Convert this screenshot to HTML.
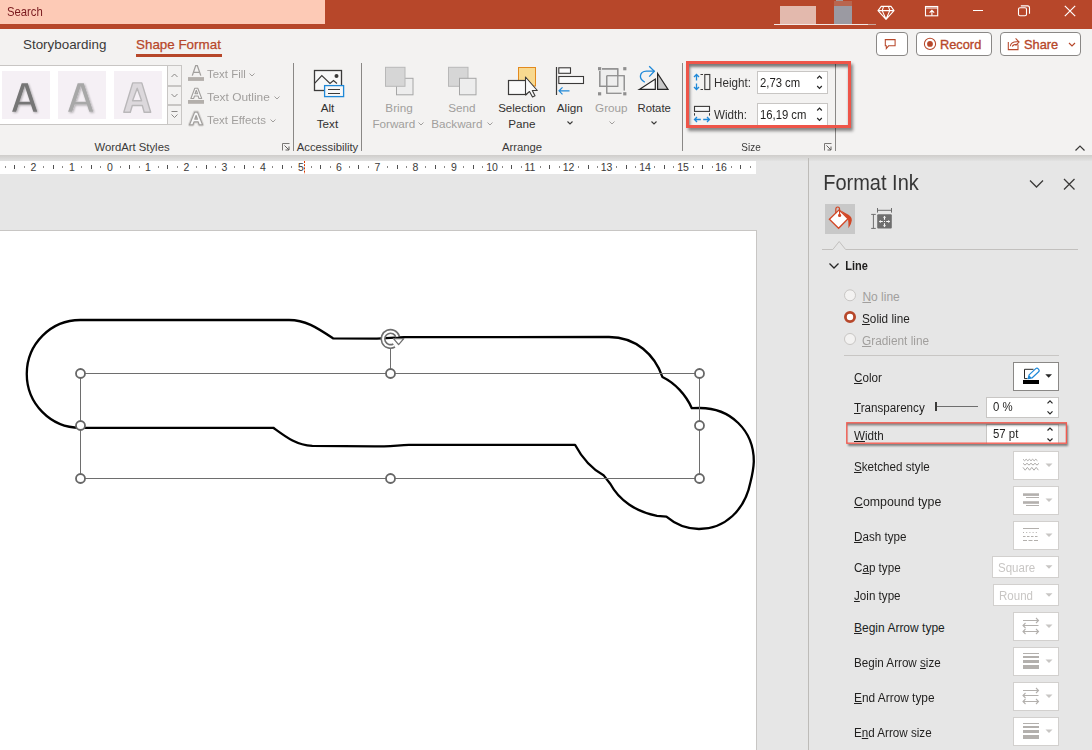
<!DOCTYPE html><html><head><meta charset="utf-8"><style>
html,body{margin:0;padding:0;width:1092px;height:750px;overflow:hidden;background:#E6E6E6;}
body{position:relative;font-family:"Liberation Sans",sans-serif;}
body>div,body>svg{position:absolute;white-space:pre;box-sizing:border-box;}
u{text-decoration:underline;text-underline-offset:1px;text-decoration-thickness:1px;}
</style></head><body>
<div style="left:0px;top:0px;width:1092px;height:29px;background:#B7472A"></div>
<div style="left:0px;top:0px;width:325px;height:24px;background:#FDCAB6"></div>
<div style="left:7px;top:7px;font-size:11.3px;line-height:11.3px;color:#7A1A1E;transform:scale(1.0,1.12);transform-origin:0 9px;">Search</div>
<div style="left:780px;top:6px;width:36px;height:18px;background:#E3B9AD"></div>
<div style="left:834px;top:6px;width:18px;height:18px;background:#9B9AA2"></div>
<div style="left:834px;top:1px;width:18px;height:5px;background:#B8664F"></div>
<div style="left:836px;top:0px;width:7px;height:1px;background:#A09A9C"></div>
<div style="left:774px;top:24px;width:94px;height:1px;background:#F4E8E4"></div>
<div style="left:868px;top:24px;width:8px;height:1px;background:#C9A79C"></div>
<svg style="left:870px;top:0px;" width="30" height="24" viewBox="0 0 30 24"><g transform="translate(-870,0)"><path d="M881.2 6.4H891L894 10.6L886 19.3L878 10.6Z M878 10.6H894 M883.6 6.4L882.2 10.6L886 19.3L889.8 10.6L888.4 6.4" fill="none" stroke="#fff" stroke-width="1.1" stroke-linejoin="round"/></g></svg>
<svg style="left:924px;top:5px;" width="16" height="13" viewBox="0 0 16 13"><rect x="1.5" y="1.5" width="12.2" height="9.3" fill="none" stroke="#fff" stroke-width="1.1"/><path d="M1.5 3H13.7 M7.9 10.8V5.4 M5.6 7.6L7.9 5.3L10.2 7.6" fill="none" stroke="#fff" stroke-width="1.1"/></svg>
<div style="left:973px;top:10px;width:10px;height:1px;background:#fff"></div>
<svg style="left:1017px;top:5px;" width="14" height="13" viewBox="0 0 14 13"><rect x="1.5" y="2.8" width="8" height="8" rx="1.5" fill="none" stroke="#fff" stroke-width="1.1"/><path d="M3.8 0.9H10.5Q12.5 0.9 12.5 2.9V8.8" fill="none" stroke="#fff" stroke-width="1.1"/></svg>
<svg style="left:1063px;top:4px;" width="14" height="14" viewBox="0 0 14 14"><path d="M1.8 1.8L12.2 12.2M12.2 1.8L1.8 12.2" stroke="#fff" stroke-width="1.2"/></svg>
<div style="left:0px;top:29px;width:1092px;height:126px;background:#F3F2F1"></div>
<div style="left:23px;top:38px;font-size:13.4px;line-height:13.4px;color:#3B3A39;">Storyboarding</div>
<div style="left:136px;top:38px;font-size:13.4px;line-height:13.4px;color:#B7472A;-webkit-text-stroke:0.25px #B7472A;">Shape Format</div>
<div style="left:136px;top:54px;width:86px;height:3px;background:#B7472A"></div>
<div style="left:876px;top:32px;width:32px;height:24px;border:1px solid #8A8886;border-radius:4px;background:#fff;"></div>
<div style="left:916px;top:32px;width:76px;height:24px;border:1px solid #8A8886;border-radius:4px;background:#fff;"></div>
<div style="left:1000px;top:32px;width:81px;height:24px;border:1px solid #8A8886;border-radius:4px;background:#fff;"></div>
<svg style="left:882px;top:36px;" width="18" height="16" viewBox="0 0 18 16"><path d="M3.3 3.6H13.1V9.8H6.6L4.3 12.6V9.8H3.3Z" fill="none" stroke="#B7472A" stroke-width="1.05" stroke-linejoin="miter"/></svg>
<svg style="left:922px;top:36px;" width="16" height="16" viewBox="0 0 16 16"><circle cx="8" cy="7.9" r="5.6" fill="none" stroke="#B7472A" stroke-width="1.05"/><circle cx="8" cy="7.9" r="2.9" fill="#B7472A"/></svg>
<div style="left:940px;top:39px;font-size:12.8px;line-height:12.8px;color:#B7472A;-webkit-text-stroke:0.35px #B7472A;">Record</div>
<svg style="left:1006px;top:36px;" width="16" height="16" viewBox="0 0 16 16"><path d="M2.3 6.1V13.6H12V8.8" fill="none" stroke="#B7472A" stroke-width="1.05"/><path d="M4.3 10.2Q5 5.2 12.2 5.8 M6.2 10.4Q7.5 8 12.2 8.3 M9.6 2.3L13.1 6.1L9.6 9.5" fill="none" stroke="#B7472A" stroke-width="1.05"/></svg>
<div style="left:1024px;top:39px;font-size:12.8px;line-height:12.8px;color:#B7472A;-webkit-text-stroke:0.35px #B7472A;">Share</div>
<svg style="left:1067px;top:41px;" width="10" height="7" viewBox="0 0 10 7"><path d="M2 2L5 5L8 2" fill="none" stroke="#B7472A" stroke-width="1.2"/></svg>
<div style="left:-1px;top:65px;width:183px;height:60px;border:1px solid #C8C6C4;background:#fff"></div>
<div style="left:167px;top:65px;width:15px;height:60px;border:1px solid #C8C6C4;background:#F3F2F1"></div>
<div style="left:167px;top:85px;width:15px;height:2px;background:#C8C6C4"></div>
<div style="left:167px;top:104px;width:15px;height:2px;background:#C8C6C4"></div>
<div style="left:2px;top:71px;width:48px;height:48px;background:#F5F0F5"></div>
<div style="left:58px;top:71px;width:48px;height:48px;background:#F5F0F5"></div>
<div style="left:114px;top:71px;width:48px;height:48px;background:#F5F0F5"></div>
<svg style="left:0px;top:60px;" width="170" height="60" viewBox="0 0 170 60"><defs><filter id="sh" x="-20%" y="-20%" width="140%" height="140%"><feGaussianBlur in="SourceAlpha" stdDeviation="0.9"/><feOffset dx="0.6" dy="1.3"/><feComponentTransfer><feFuncA type="linear" slope="0.3"/></feComponentTransfer><feMerge><feMergeNode/><feMergeNode in="SourceGraphic"/></feMerge></filter></defs>
<g transform="translate(0,-60)">
<path d="M12.10 111.80 L21.70 83.20 L27.80 83.20 L37.30 111.80 L33.30 111.80 L30.84 104.40 L18.58 104.40 L16.10 111.80ZM19.46 101.80 L29.98 101.80 L24.75 86.05Z" fill="#767676" fill-rule="evenodd" filter="url(#sh)"/>
<path d="M68.10 111.80 L77.70 83.20 L83.80 83.20 L93.30 111.80 L89.30 111.80 L86.84 104.40 L74.58 104.40 L72.10 111.80ZM75.46 101.80 L85.98 101.80 L80.75 86.05Z" fill="#A8A8A8" fill-rule="evenodd" filter="url(#sh)"/>
<path d="M123.8 112.3 L132.7 82.9 L141.8 82.9 L150.7 112.3 L144.2 112.3 L142.3 105.5 L132.3 105.5 L130.3 112.3ZM132.6 100.8 L141.6 100.8 L137.2 88.3Z" fill="#DCD8DC" fill-rule="evenodd" stroke="#B9B7B9" stroke-width="1.4" stroke-linejoin="round"/>
</g></svg>
<svg style="left:167px;top:66px;" width="15" height="58" viewBox="0 0 15 58"><path d="M4.5 11L7.5 8L10.5 11 M4.5 28L7.5 31L10.5 28 M4.5 45.5H10.5 M4.5 48.5L7.5 51.5L10.5 48.5" fill="none" stroke="#8A8886" stroke-width="1"/></svg>
<svg style="left:186px;top:62px;" width="22" height="66" viewBox="0 0 22 66"><path d="M6.3 13.6L9.7 3.6H11.3L14.8 13.6M8 10.4H13" fill="none" stroke="#A19F9D" stroke-width="1.3"/>
<rect x="2" y="15.1" width="16" height="3.8" fill="#B3AFAB"/>
<path d="M4.9 36.5L8.8 26.3L11.8 26.3L15.7 36.5L13 36.5L12.1 34L8.5 34L7.6 36.5Z M9 31.8L11.6 31.8L10.3 28.2Z" fill="#F8F8F8" fill-rule="evenodd" stroke="#A19F9D" stroke-width="1.1" stroke-linejoin="round"/>
<rect x="2" y="38" width="16" height="3.8" fill="#B3AFAB"/>
<path d="M3.5 62.8L8.6 50.2L11.6 50.2L16.6 62.8L13.2 62.8L12.1 59.8L8.1 59.8L7 62.8Z M8.8 57.2L11.4 57.2L10.1 53.5Z" fill="none" stroke="#DAD8D6" stroke-width="3.2" stroke-linejoin="round"/>
<path d="M3.5 62.8L8.6 50.2L11.6 50.2L16.6 62.8L13.2 62.8L12.1 59.8L8.1 59.8L7 62.8Z M8.8 57.2L11.4 57.2L10.1 53.5Z" fill="#F8F8F8" fill-rule="evenodd" stroke="#A19F9D" stroke-width="1.2" stroke-linejoin="round"/></svg>
<div style="left:207.3px;top:69px;font-size:11.5px;line-height:11.5px;color:#A19F9D;transform:scale(0.995,1.0);transform-origin:0 9px;">Text Fill</div>
<div style="left:207.3px;top:92px;font-size:11.5px;line-height:11.5px;color:#A19F9D;transform:scale(1.035,1.0);transform-origin:0 9px;">Text Outline</div>
<div style="left:207.3px;top:115px;font-size:11.5px;line-height:11.5px;color:#A19F9D;transform:scale(0.995,1.0);transform-origin:0 9px;">Text Effects</div>
<svg style="left:248px;top:71.5px;" width="8" height="6" viewBox="0 0 8 6"><path d="M1.5 1.5L4 4L6.5 1.5" fill="none" stroke="#A19F9D" stroke-width="1"/></svg>
<svg style="left:272.5px;top:94.5px;" width="8" height="6" viewBox="0 0 8 6"><path d="M1.5 1.5L4 4L6.5 1.5" fill="none" stroke="#A19F9D" stroke-width="1"/></svg>
<svg style="left:268.5px;top:117.5px;" width="8" height="6" viewBox="0 0 8 6"><path d="M1.5 1.5L4 4L6.5 1.5" fill="none" stroke="#A19F9D" stroke-width="1"/></svg>
<div style="left:-368px;width:1000px;text-align:center;top:142px;font-size:11.3px;line-height:11.3px;color:#3B3A39;">WordArt Styles</div>
<svg style="left:282px;top:143px;" width="9" height="9" viewBox="0 0 9 9"><path d="M0.5 7.5V0.5H7.5" fill="none" stroke="#7A7876" stroke-width="1"/><path d="M2.5 2.5L7 7M7 3.5V7H3.5" fill="none" stroke="#605E5C" stroke-width="1"/></svg>
<div style="left:293px;top:63px;width:1px;height:88px;background:#8A8886"></div>
<div style="left:361px;top:63px;width:1px;height:88px;background:#8A8886"></div>
<div style="left:682px;top:63px;width:1px;height:88px;background:#8A8886"></div>
<div style="left:835px;top:63px;width:1px;height:88px;background:#8A8886"></div>
<svg style="left:312px;top:68px;" width="34" height="31" viewBox="0 0 34 31"><rect x="2.5" y="2.5" width="27" height="20" fill="#F8F8F8" stroke="#3B3A39" stroke-width="1.3"/>
<path d="M2.8 15.2L9.8 7.5L18 15.5L21.5 12.5L25 15.5" fill="none" stroke="#3B3A39" stroke-width="1.2"/>
<circle cx="24.5" cy="8" r="2" fill="#3B3A39"/>
<rect x="12.6" y="17.6" width="19" height="11" fill="#F8F8F8" stroke="#1E88D8" stroke-width="1.3"/>
<path d="M16 21.5H28M16 25.5H28" stroke="#3B3A39" stroke-width="1"/></svg>
<div style="left:-172.5px;width:1000px;text-align:center;top:102px;font-size:11.7px;line-height:11.7px;color:#323130;">Alt</div>
<div style="left:-172.5px;width:1000px;text-align:center;top:118px;font-size:11.7px;line-height:11.7px;color:#323130;">Text</div>
<div style="left:-172.5px;width:1000px;text-align:center;top:142px;font-size:11.3px;line-height:11.3px;color:#3B3A39;">Accessibility</div>
<svg style="left:380px;top:62px;" width="40" height="36" viewBox="0 0 40 36"><rect x="16.5" y="16.3" width="16.5" height="16.5" fill="#EDEDED" stroke="#A6A6A6" stroke-width="1"/>
<rect x="5.5" y="5.3" width="19.5" height="19" fill="#D6D6D6" stroke="#B8B8B8" stroke-width="1"/></svg>
<div style="left:-101px;width:1000px;text-align:center;top:102px;font-size:11.7px;line-height:11.7px;color:#A19F9D;">Bring</div>
<div style="left:372.4px;top:118px;font-size:11.7px;line-height:11.7px;color:#A19F9D;">Forward</div>
<svg style="left:417px;top:120.5px;" width="8" height="6" viewBox="0 0 8 6"><path d="M1.5 1.5L4 4L6.5 1.5" fill="none" stroke="#A19F9D" stroke-width="1"/></svg>
<svg style="left:443px;top:62px;" width="40" height="36" viewBox="0 0 40 36"><rect x="5.5" y="5.3" width="19.5" height="19" fill="#D6D6D6" stroke="#B8B8B8" stroke-width="1"/>
<rect x="16.5" y="16.3" width="16.5" height="16.5" fill="#EDEDED" stroke="#A6A6A6" stroke-width="1"/></svg>
<div style="left:-38.19999999999999px;width:1000px;text-align:center;top:102px;font-size:11.7px;line-height:11.7px;color:#A19F9D;">Send</div>
<div style="left:431.2px;top:118px;font-size:11.7px;line-height:11.7px;color:#A19F9D;">Backward</div>
<svg style="left:486px;top:120.5px;" width="8" height="6" viewBox="0 0 8 6"><path d="M1.5 1.5L4 4L6.5 1.5" fill="none" stroke="#A19F9D" stroke-width="1"/></svg>
<svg style="left:505px;top:64px;" width="36" height="34" viewBox="0 0 36 34"><rect x="13.5" y="3.5" width="17" height="18.5" fill="#F8D98F" stroke="#E38A1E" stroke-width="1"/>
<rect x="3.5" y="16.5" width="18" height="14" fill="#FAFAFA" stroke="#3B3A39" stroke-width="1.2"/>
<path d="M20.5 13V31L24.5 27.5L27.5 33L30 31.8L27.3 26.5H32.3Z" fill="#FAFAFA" stroke="#3B3A39" stroke-width="1.1" stroke-linejoin="round"/></svg>
<div style="left:21.799999999999955px;width:1000px;text-align:center;top:103px;font-size:11.5px;line-height:11.5px;color:#323130;">Selection</div>
<div style="left:21.799999999999955px;width:1000px;text-align:center;top:118px;font-size:11.7px;line-height:11.7px;color:#323130;">Pane</div>
<svg style="left:553px;top:64px;" width="34" height="34" viewBox="0 0 34 34"><path d="M3.5 3V31" stroke="#3B3A39" stroke-width="1.2"/>
<rect x="5.8" y="3.8" width="11.7" height="5.5" fill="#FAFAFA" stroke="#3B3A39" stroke-width="1.1"/>
<rect x="5.8" y="12.5" width="24.7" height="7" fill="#FAFAFA" stroke="#3B3A39" stroke-width="1.1"/>
<path d="M6 26.8H16.5M9.5 23.3L6 26.8L9.5 30.3" fill="none" stroke="#1E88D8" stroke-width="1.2"/></svg>
<div style="left:69.79999999999995px;width:1000px;text-align:center;top:102px;font-size:11.7px;line-height:11.7px;color:#323130;">Align</div>
<svg style="left:566px;top:120px;" width="8" height="6" viewBox="0 0 8 6"><path d="M1.5 1.5L4 4L6.5 1.5" fill="none" stroke="#3B3A39" stroke-width="1.1"/></svg>
<svg style="left:594px;top:62px;" width="36" height="36" viewBox="0 0 36 36"><g transform="translate(-594,-62)">
<path d="M602 68.9H617.8V86.4H599.8V71" fill="#EEEEEE" stroke="#8F8F8F" stroke-width="1.1"/>
<path d="M606.8 75.7H624.2V90.5 M621.5 93.2H606.8V75.7" fill="none" stroke="#8F8F8F" stroke-width="1.1"/>
<rect x="607.3" y="76.2" width="16.4" height="16.5" fill="#EEEEEE" opacity="0.6"/>
<path d="M602 68.9H617.8V86.4H599.8V71 M606.8 75.7H624.2V90.5 M621.5 93.2H606.8V75.7" fill="none" stroke="#8F8F8F" stroke-width="1.1"/>
<rect x="598" y="67.1" width="3.2" height="3.2" fill="#8F8F8F"/><rect x="623.2" y="67.1" width="3.2" height="3.2" fill="#8F8F8F"/>
<rect x="598" y="92.2" width="3.2" height="3.2" fill="#8F8F8F"/><rect x="623.2" y="92.2" width="3.2" height="3.2" fill="#8F8F8F"/></g></svg>
<div style="left:111.29999999999995px;width:1000px;text-align:center;top:102px;font-size:11.7px;line-height:11.7px;color:#A19F9D;">Group</div>
<svg style="left:607.5px;top:120px;" width="8" height="6" viewBox="0 0 8 6"><path d="M1.5 1.5L4 4L6.5 1.5" fill="none" stroke="#A19F9D" stroke-width="1"/></svg>
<svg style="left:634px;top:62px;" width="38" height="32" viewBox="0 0 38 32"><g transform="translate(-634,-62)">
<path d="M639.3 89.4L655.3 79V89.4Z" fill="#FAFAFA" stroke="#262626" stroke-width="1.2" stroke-linejoin="miter"/>
<path d="M657.6 73.5V89.4H668Z" fill="#C8C8C8" stroke="#262626" stroke-width="1.2" stroke-linejoin="miter"/>
<path d="M644.8 82.2Q640.2 79.5 640.4 76Q641 71.3 646.5 71.2H654.5" fill="none" stroke="#1E88D8" stroke-width="1.3"/>
<path d="M649.2 66.2L654.3 71.2L649.2 76.6" fill="none" stroke="#1E88D8" stroke-width="1.3"/></g></svg>
<div style="left:154.20000000000005px;width:1000px;text-align:center;top:103px;font-size:11.3px;line-height:11.3px;color:#323130;">Rotate</div>
<svg style="left:649.5px;top:120px;" width="8" height="6" viewBox="0 0 8 6"><path d="M1.5 1.5L4 4L6.5 1.5" fill="none" stroke="#3B3A39" stroke-width="1.1"/></svg>
<div style="left:22px;width:1000px;text-align:center;top:142px;font-size:11.3px;line-height:11.3px;color:#3B3A39;">Arrange</div>
<svg style="left:692px;top:72px;" width="20" height="20" viewBox="0 0 20 20"><path d="M4.5 2.5V8.6M4.5 11.4V17.5M2 5L4.5 2.5L7 5M2 15L4.5 17.5L7 15" fill="none" stroke="#1E88D8" stroke-width="1.3"/>
<path d="M8.5 2.5H11 M8.5 17.5H11" stroke="#3B3A39" stroke-width="1"/>
<rect x="12.8" y="2.5" width="5" height="15" fill="none" stroke="#3B3A39" stroke-width="1.1"/></svg>
<div style="left:714px;top:77px;font-size:12px;line-height:12px;color:#323130;transform:scale(0.97,1.0);transform-origin:0 10px;">Height:</div>
<svg style="left:692px;top:104px;" width="20" height="20" viewBox="0 0 20 20"><rect x="2.5" y="2.4" width="15" height="5" fill="#F8F8F8" stroke="#3B3A39" stroke-width="1.1"/>
<path d="M2.5 9.2V11.6 M17.5 9.2V11.6" stroke="#3B3A39" stroke-width="1"/>
<path d="M2.5 15.5H8.8M11.2 15.5H17.5M5 13L2.5 15.5L5 18M15 13L17.5 15.5L15 18" fill="none" stroke="#1E88D8" stroke-width="1.3"/></svg>
<div style="left:714px;top:109px;font-size:12px;line-height:12px;color:#323130;transform:scale(0.97,1.0);transform-origin:0 10px;">Width:</div>
<div style="left:757px;top:71px;width:71px;height:23px;border:1px solid #C8C6C4;background:#fff"></div>
<div style="left:757px;top:103px;width:71px;height:24px;border:1px solid #C8C6C4;background:#fff"></div>
<div style="left:760.3px;top:77px;font-size:12px;line-height:12px;color:#201F1E;transform:scale(0.94,1.0);transform-origin:0 10px;">2,73 cm</div>
<div style="left:760.3px;top:109px;font-size:12px;line-height:12px;color:#201F1E;transform:scale(0.94,1.0);transform-origin:0 10px;">16,19 cm</div>
<svg style="left:815.5px;top:74px;" width="7" height="16" viewBox="0 0 7 16"><path d="M1.2 4.5L3.5 2.2L5.8 4.5 M1.2 12L3.5 14.3L5.8 12" fill="none" stroke="#262626" stroke-width="1.2"/></svg>
<svg style="left:815.5px;top:106px;" width="7" height="16" viewBox="0 0 7 16"><path d="M1.2 4.5L3.5 2.2L5.8 4.5 M1.2 12L3.5 14.3L5.8 12" fill="none" stroke="#262626" stroke-width="1.2"/></svg>
<div style="left:251px;width:1000px;text-align:center;top:142px;font-size:11.3px;line-height:11.3px;color:#3B3A39;transform:scale(0.88,1.0);transform-origin:50% 9px;">Size</div>
<svg style="left:824px;top:143px;" width="9" height="9" viewBox="0 0 9 9"><path d="M0.5 7.5V0.5H7.5" fill="none" stroke="#7A7876" stroke-width="1"/><path d="M2.5 2.5L7 7M7 3.5V7H3.5" fill="none" stroke="#605E5C" stroke-width="1"/></svg>
<svg style="left:1074px;top:144px;" width="12" height="8" viewBox="0 0 12 8"><path d="M1.5 6.5L6 2L10.5 6.5" fill="none" stroke="#3B3A39" stroke-width="1.2"/></svg>
<div style="left:686px;top:61px;width:165px;height:67px;border:3px solid #EE5549;box-shadow:2px 3px 3px rgba(0,0,0,0.45), inset 1px 3px 3px rgba(0,0,0,0.5)"></div>
<div style="left:0px;top:155px;width:1092px;height:6px;background:linear-gradient(#CFCDCB,#E2E2E2)"></div>
<div style="left:0px;top:161px;width:756px;height:13px;background:#fff"></div>
<svg style="left:0px;top:0px;" width="760" height="180" viewBox="0 0 760 180"><rect x="5" y="166" width="1" height="2" fill="#8A8886"/><rect x="14" y="165" width="1" height="4" fill="#505050"/><rect x="24" y="166" width="1" height="2" fill="#8A8886"/><rect x="43" y="166" width="1" height="2" fill="#8A8886"/><rect x="53" y="165" width="1" height="4" fill="#505050"/><rect x="62" y="166" width="1" height="2" fill="#8A8886"/><rect x="81" y="166" width="1" height="2" fill="#8A8886"/><rect x="91" y="165" width="1" height="4" fill="#505050"/><rect x="100" y="166" width="1" height="2" fill="#8A8886"/><rect x="120" y="166" width="1" height="2" fill="#8A8886"/><rect x="129" y="165" width="1" height="4" fill="#505050"/><rect x="139" y="166" width="1" height="2" fill="#8A8886"/><rect x="158" y="166" width="1" height="2" fill="#8A8886"/><rect x="167" y="165" width="1" height="4" fill="#505050"/><rect x="177" y="166" width="1" height="2" fill="#8A8886"/><rect x="196" y="166" width="1" height="2" fill="#8A8886"/><rect x="206" y="165" width="1" height="4" fill="#505050"/><rect x="215" y="166" width="1" height="2" fill="#8A8886"/><rect x="234" y="166" width="1" height="2" fill="#8A8886"/><rect x="244" y="165" width="1" height="4" fill="#505050"/><rect x="253" y="166" width="1" height="2" fill="#8A8886"/><rect x="272" y="166" width="1" height="2" fill="#8A8886"/><rect x="282" y="165" width="1" height="4" fill="#505050"/><rect x="291" y="166" width="1" height="2" fill="#8A8886"/><rect x="311" y="166" width="1" height="2" fill="#8A8886"/><rect x="320" y="165" width="1" height="4" fill="#505050"/><rect x="330" y="166" width="1" height="2" fill="#8A8886"/><rect x="349" y="166" width="1" height="2" fill="#8A8886"/><rect x="358" y="165" width="1" height="4" fill="#505050"/><rect x="368" y="166" width="1" height="2" fill="#8A8886"/><rect x="387" y="166" width="1" height="2" fill="#8A8886"/><rect x="397" y="165" width="1" height="4" fill="#505050"/><rect x="406" y="166" width="1" height="2" fill="#8A8886"/><rect x="425" y="166" width="1" height="2" fill="#8A8886"/><rect x="435" y="165" width="1" height="4" fill="#505050"/><rect x="444" y="166" width="1" height="2" fill="#8A8886"/><rect x="463" y="166" width="1" height="2" fill="#8A8886"/><rect x="473" y="165" width="1" height="4" fill="#505050"/><rect x="482" y="166" width="1" height="2" fill="#8A8886"/><rect x="502" y="166" width="1" height="2" fill="#8A8886"/><rect x="511" y="165" width="1" height="4" fill="#505050"/><rect x="521" y="166" width="1" height="2" fill="#8A8886"/><rect x="540" y="166" width="1" height="2" fill="#8A8886"/><rect x="549" y="165" width="1" height="4" fill="#505050"/><rect x="559" y="166" width="1" height="2" fill="#8A8886"/><rect x="578" y="166" width="1" height="2" fill="#8A8886"/><rect x="588" y="165" width="1" height="4" fill="#505050"/><rect x="597" y="166" width="1" height="2" fill="#8A8886"/><rect x="616" y="166" width="1" height="2" fill="#8A8886"/><rect x="626" y="165" width="1" height="4" fill="#505050"/><rect x="635" y="166" width="1" height="2" fill="#8A8886"/><rect x="654" y="166" width="1" height="2" fill="#8A8886"/><rect x="664" y="165" width="1" height="4" fill="#505050"/><rect x="673" y="166" width="1" height="2" fill="#8A8886"/><rect x="693" y="166" width="1" height="2" fill="#8A8886"/><rect x="702" y="165" width="1" height="4" fill="#505050"/><rect x="712" y="166" width="1" height="2" fill="#8A8886"/><rect x="731" y="166" width="1" height="2" fill="#8A8886"/><rect x="740" y="165" width="1" height="4" fill="#505050"/><rect x="750" y="166" width="1" height="2" fill="#8A8886"/></svg>
<div style="left:-466.5px;width:1000px;text-align:center;top:162px;font-size:10.5px;line-height:10.5px;color:#3B3A39;">2</div>
<div style="left:-428.0px;width:1000px;text-align:center;top:162px;font-size:10.5px;line-height:10.5px;color:#3B3A39;">1</div>
<div style="left:-390.0px;width:1000px;text-align:center;top:162px;font-size:10.5px;line-height:10.5px;color:#3B3A39;">0</div>
<div style="left:-352.0px;width:1000px;text-align:center;top:162px;font-size:10.5px;line-height:10.5px;color:#3B3A39;">1</div>
<div style="left:-313.5px;width:1000px;text-align:center;top:162px;font-size:10.5px;line-height:10.5px;color:#3B3A39;">2</div>
<div style="left:-275.5px;width:1000px;text-align:center;top:162px;font-size:10.5px;line-height:10.5px;color:#3B3A39;">3</div>
<div style="left:-237.0px;width:1000px;text-align:center;top:162px;font-size:10.5px;line-height:10.5px;color:#3B3A39;">4</div>
<div style="left:-199.0px;width:1000px;text-align:center;top:162px;font-size:10.5px;line-height:10.5px;color:#3B3A39;">5</div>
<div style="left:-161.0px;width:1000px;text-align:center;top:162px;font-size:10.5px;line-height:10.5px;color:#3B3A39;">6</div>
<div style="left:-122.5px;width:1000px;text-align:center;top:162px;font-size:10.5px;line-height:10.5px;color:#3B3A39;">7</div>
<div style="left:-84.5px;width:1000px;text-align:center;top:162px;font-size:10.5px;line-height:10.5px;color:#3B3A39;">8</div>
<div style="left:-46.0px;width:1000px;text-align:center;top:162px;font-size:10.5px;line-height:10.5px;color:#3B3A39;">9</div>
<div style="left:-8.0px;width:1000px;text-align:center;top:162px;font-size:10.5px;line-height:10.5px;color:#3B3A39;">10</div>
<div style="left:30.0px;width:1000px;text-align:center;top:162px;font-size:10.5px;line-height:10.5px;color:#3B3A39;">11</div>
<div style="left:68.5px;width:1000px;text-align:center;top:162px;font-size:10.5px;line-height:10.5px;color:#3B3A39;">12</div>
<div style="left:106.5px;width:1000px;text-align:center;top:162px;font-size:10.5px;line-height:10.5px;color:#3B3A39;">13</div>
<div style="left:145.0px;width:1000px;text-align:center;top:162px;font-size:10.5px;line-height:10.5px;color:#3B3A39;">14</div>
<div style="left:183.0px;width:1000px;text-align:center;top:162px;font-size:10.5px;line-height:10.5px;color:#3B3A39;">15</div>
<div style="left:221.0px;width:1000px;text-align:center;top:162px;font-size:10.5px;line-height:10.5px;color:#3B3A39;">16</div>
<svg style="left:303px;top:161px;" width="3" height="13" viewBox="0 0 3 13"><path d="M1.5 0V13" stroke="#D83B01" stroke-width="1" stroke-dasharray="2 1.2"/></svg>
<div style="left:-1px;top:230px;width:758px;height:521px;background:#fff;border:1px solid #C8C6C4"></div>
<div style="left:808px;top:158px;width:1px;height:592px;background:#BDBBB8"></div>
<div style="left:823.2px;top:173px;font-size:20px;line-height:20px;color:#363636;transform:scale(1.0,1.08);transform-origin:0 17px;">Format Ink</div>
<svg style="left:1027px;top:177px;" width="18" height="13" viewBox="0 0 18 13"><path d="M3 3.5L9.5 10L16 3.5" fill="none" stroke="#3B3A39" stroke-width="1.3"/></svg>
<svg style="left:1061px;top:176px;" width="16" height="16" viewBox="0 0 16 16"><path d="M3 3L13.5 13.5M13.5 3L3 13.5" fill="none" stroke="#3B3A39" stroke-width="1.3"/></svg>
<div style="left:825px;top:204px;width:30px;height:30px;background:#C8C8C8"></div>
<svg style="left:825px;top:204px;" width="30" height="30" viewBox="0 0 30 30"><path d="M4.4 15.3L14.1 5.9L23 14.7L13.6 24.3Z" fill="#fff" stroke="#D24726" stroke-width="1.3" stroke-linejoin="miter"/>
<path d="M10.8 9.2V5.3Q10.8 3 12.7 3Q14.6 3 14.6 5.3V11.3" fill="none" stroke="#D24726" stroke-width="1.2"/>
<circle cx="14.6" cy="11.4" r="1.6" fill="#D24726"/>
<path d="M15.5 6.3Q20 9 23.5 10.8Q27 13 26.8 16.5Q26.5 20 23.5 24.3Q23.6 19 23 14.7Z" fill="#D24726"/></svg>
<svg style="left:866px;top:204px;" width="30" height="30" viewBox="0 0 30 30"><path d="M7.4 10.4V24.4 M5.2 10.4H9.8 M5.2 24.4H9.8" fill="none" stroke="#6E6E6E" stroke-width="1"/>
<path d="M11.5 4V8.6 M25.5 4V8.6 M11.5 6.3H25.5" fill="none" stroke="#6E6E6E" stroke-width="1"/>
<rect x="11.2" y="10.2" width="14.6" height="14.4" rx="1" fill="#6E6E6E"/>
<path d="M18.5 13.5V15.8 M18.5 19.2V21.5 M14.5 17.5H16.8 M20.2 17.5H22.5" stroke="#fff" stroke-width="1.1"/>
<path d="M18.5 11.8L17 13.8H20Z M18.5 23.2L17 21.2H20Z M12.8 17.5L14.8 16V19Z M24.2 17.5L22.2 16V19Z" fill="#fff"/>
<rect x="18" y="17" width="1" height="1" fill="#fff"/></svg>
<svg style="left:815px;top:238px;" width="270" height="14" viewBox="0 0 270 14"><path d="M7 11.5H17.8L24.2 3.5L30.6 11.5H263" fill="none" stroke="#C2C0BE" stroke-width="1"/></svg>
<svg style="left:826px;top:260px;" width="14" height="12" viewBox="0 0 14 12"><path d="M3.5 3.5L8 8L12.5 3.5" fill="none" stroke="#262626" stroke-width="1.3"/></svg>
<div style="left:845.3px;top:261px;font-size:11px;line-height:11px;color:#201F1E;font-weight:700;transform:scale(1.0,1.12);transform-origin:0 9px;">Line</div>
<svg style="left:842px;top:287px;" width="16" height="60" viewBox="0 0 16 60"><circle cx="8" cy="8.3" r="5.5" fill="#F3F2F1" stroke="#C8C6C4" stroke-width="1"/>
<circle cx="8" cy="30" r="4.6" fill="#fff" stroke="#B7472A" stroke-width="2.8"/>
<circle cx="8" cy="52" r="5.5" fill="#F3F2F1" stroke="#C8C6C4" stroke-width="1"/></svg>
<div style="left:862.4px;top:291px;font-size:12px;line-height:12px;color:#A19F9D;"><u>N</u>o line</div>
<div style="left:862.4px;top:313px;font-size:12px;line-height:12px;color:#201F1E;transform:scale(0.98,1.0);transform-origin:0 10px;"><u>S</u>olid line</div>
<div style="left:862.4px;top:335px;font-size:12px;line-height:12px;color:#A19F9D;transform:scale(0.985,1.0);transform-origin:0 10px;"><u>G</u>radient line</div>
<div style="left:844px;top:355px;width:215px;height:1px;background:#C8C6C4"></div>
<div style="left:854px;top:372px;font-size:12px;line-height:12px;color:#201F1E;transform:scale(0.97,1.0);transform-origin:0 10px;"><u>C</u>olor</div>
<div style="left:854px;top:402px;font-size:12px;line-height:12px;color:#201F1E;transform:scale(0.97,1.0);transform-origin:0 10px;"><u>T</u>ransparency</div>
<div style="left:854px;top:430px;font-size:12px;line-height:12px;color:#201F1E;transform:scale(0.97,1.0);transform-origin:0 10px;"><u>W</u>idth</div>
<div style="left:854px;top:461px;font-size:12px;line-height:12px;color:#201F1E;transform:scale(0.97,1.0);transform-origin:0 10px;"><u>S</u>ketched style</div>
<div style="left:854px;top:496px;font-size:12px;line-height:12px;color:#201F1E;transform:scale(1.03,1.0);transform-origin:0 10px;"><u>C</u>ompound type</div>
<div style="left:854px;top:531px;font-size:12px;line-height:12px;color:#201F1E;transform:scale(0.97,1.0);transform-origin:0 10px;"><u>D</u>ash type</div>
<div style="left:854px;top:562px;font-size:12px;line-height:12px;color:#201F1E;transform:scale(0.97,1.0);transform-origin:0 10px;">C<u>a</u>p type</div>
<div style="left:854px;top:590px;font-size:12px;line-height:12px;color:#201F1E;transform:scale(0.97,1.0);transform-origin:0 10px;"><u>J</u>oin type</div>
<div style="left:854px;top:622px;font-size:12px;line-height:12px;color:#201F1E;"><u>B</u>egin Arrow type</div>
<div style="left:854px;top:657px;font-size:12px;line-height:12px;color:#201F1E;transform:scale(0.97,1.0);transform-origin:0 10px;">Begin Arrow <u>s</u>ize</div>
<div style="left:854px;top:692px;font-size:12px;line-height:12px;color:#201F1E;transform:scale(0.99,1.0);transform-origin:0 10px;"><u>E</u>nd Arrow type</div>
<div style="left:854px;top:727px;font-size:12px;line-height:12px;color:#201F1E;transform:scale(0.97,1.0);transform-origin:0 10px;">E<u>n</u>d Arrow size</div>
<div style="left:1013px;top:362px;width:46px;height:29px;border:1px solid #8A8886;background:#fff"></div>
<svg style="left:1013px;top:362px;" width="46" height="29" viewBox="0 0 46 29"><path d="M11.5 16.6V7.3H20.5 M11.5 16.6H14.5" fill="none" stroke="#262626" stroke-width="1"/>
<g transform="translate(15.2,16.6) rotate(-43)"><path d="M0 0L3.2 -2.1H12.3Q14 -2.1 14 0Q14 2.1 12.3 2.1H3.2Z" fill="#fff" stroke="#1E88D8" stroke-width="1.2" stroke-linejoin="round"/><path d="M0.3 0L3 -1.6V1.6Z" fill="#1E88D8"/><path d="M4.5 0H12" stroke="#fff" stroke-width="1"/></g>
<rect x="10" y="18" width="16" height="4" fill="#000"/>
<path d="M32.3 12.3H39L35.65 15.7Z" fill="#262626"/></svg>
<div style="left:935px;top:402px;width:2px;height:9px;background:#3B3A39"></div>
<div style="left:937px;top:406px;width:41px;height:1px;background:#6E6E6E"></div>
<div style="left:986px;top:397px;width:73px;height:21px;border:1px solid #C8C6C4;background:#fff"></div>
<div style="left:993.2px;top:401px;font-size:12px;line-height:12px;color:#201F1E;transform:scale(0.95,1.0);transform-origin:0 10px;">0 %</div>
<svg style="left:1045px;top:398px;" width="10" height="20" viewBox="0 0 10 20"><path d="M2.5 5.3L5 2.8L7.5 5.3 M2.5 13.3L5 15.8L7.5 13.3" fill="none" stroke="#262626" stroke-width="1.2"/></svg>
<div style="left:986px;top:424px;width:73px;height:20px;border:1px solid #C8C6C4;border-bottom:none;background:#fff"></div>
<div style="left:993.2px;top:428px;font-size:12px;line-height:12px;color:#201F1E;transform:scale(0.95,1.0);transform-origin:0 10px;">57 pt</div>
<svg style="left:1045px;top:425px;" width="10" height="20" viewBox="0 0 10 20"><path d="M2.5 5.5L5 3L7.5 5.5 M2.5 13.5L5 16L7.5 13.5" fill="none" stroke="#262626" stroke-width="1.2"/></svg>
<div style="left:846.5px;top:422.5px;width:220px;height:21px;box-shadow:1px 2px 2px rgba(0,0,0,0.45), inset 0px 2.5px 2px rgba(0,0,0,0.4)"></div>
<svg style="left:840px;top:416px;" width="232" height="34" viewBox="0 0 232 34"><rect x="6.8" y="6.8" width="219.6" height="20.4" fill="none" stroke="#F35A4F" stroke-width="1.35"/></svg>
<div style="left:1013px;top:451px;width:46px;height:29px;border:1px solid #D2D0CE;background:#fff"></div>
<div style="left:1013px;top:486px;width:46px;height:29px;border:1px solid #D2D0CE;background:#fff"></div>
<div style="left:1013px;top:521px;width:46px;height:29px;border:1px solid #D2D0CE;background:#fff"></div>
<div style="left:1013px;top:612px;width:46px;height:29px;border:1px solid #D2D0CE;background:#fff"></div>
<div style="left:1013px;top:647px;width:46px;height:29px;border:1px solid #D2D0CE;background:#fff"></div>
<div style="left:1013px;top:682px;width:46px;height:29px;border:1px solid #D2D0CE;background:#fff"></div>
<div style="left:1013px;top:717px;width:46px;height:29px;border:1px solid #D2D0CE;background:#fff"></div>
<svg style="left:1013px;top:451px;" width="46" height="29" viewBox="0 0 46 29"><path d="M10.0 8.3 L11.6 9.7 L13.2 8.3 L14.8 9.7 L16.4 8.3 L18.0 9.7 L19.6 8.3 L21.2 9.7 L22.8 8.3 L24.4 9.7 M10.0 12.3 L12.0 14.1 L14.0 12.3 L16.0 14.1 L18.0 12.3 L20.0 14.1 L22.0 12.3 L24.0 14.1 L26.0 12.3 M10.0 16.4 L12.2 19.2 L14.4 16.4 L16.6 19.2 L18.8 16.4 L21.0 19.2 L23.2 16.4 L25.4 19.2" fill="none" stroke="#ABA9A7" stroke-width="1"/><path d="M32.5 12.5H39.5L36 16Z" fill="#C8C6C4"/></svg>
<svg style="left:1013px;top:486px;" width="46" height="29" viewBox="0 0 46 29"><rect x="10" y="7.3" width="16" height="2.6" fill="#B3B0AD"/><rect x="13" y="11" width="13" height="1" fill="#B3B0AD"/><rect x="10" y="15.2" width="16" height="2.6" fill="#B3B0AD"/><rect x="13" y="19" width="13" height="1" fill="#B3B0AD"/><path d="M32.5 12.5H39.5L36 16Z" fill="#C8C6C4"/></svg>
<svg style="left:1013px;top:521px;" width="46" height="29" viewBox="0 0 46 29"><path d="M10 7.5H26" stroke="#B3B0AD"/><path d="M10 11.5H26" stroke="#B3B0AD" stroke-dasharray="1 2.2"/><path d="M10 15.5H26" stroke="#B3B0AD" stroke-dasharray="2.5 1.5"/><path d="M10 19.5H26" stroke="#B3B0AD" stroke-dasharray="4 1.5"/><path d="M32.5 12.5H39.5L36 16Z" fill="#C8C6C4"/></svg>
<svg style="left:1013px;top:612px;" width="46" height="29" viewBox="0 0 46 29"><path d="M10 8.5H25.5M23 6L25.5 8.5L23 11 M10 13.5H25.5M12.5 11L10 13.5L12.5 16 M10 19.5H25.5M12.5 17L10 19.5L12.5 22M23 17L25.5 19.5L23 22" fill="none" stroke="#B3B0AD" stroke-width="1.1"/><path d="M32.5 12.5H39.5L36 16Z" fill="#C8C6C4"/></svg>
<svg style="left:1013px;top:647px;" width="46" height="29" viewBox="0 0 46 29"><rect x="10" y="6" width="16" height="1" fill="#B3B0AD"/><rect x="10" y="9" width="16" height="2" fill="#B3B0AD"/><rect x="10" y="13" width="16" height="3" fill="#B3B0AD"/><rect x="10" y="18" width="16" height="4" fill="#B3B0AD"/><path d="M32.5 12.5H39.5L36 16Z" fill="#C8C6C4"/></svg>
<svg style="left:1013px;top:682px;" width="46" height="29" viewBox="0 0 46 29"><path d="M10 8.5H25.5M23 6L25.5 8.5L23 11 M10 13.5H25.5M12.5 11L10 13.5L12.5 16 M10 19.5H25.5M12.5 17L10 19.5L12.5 22M23 17L25.5 19.5L23 22" fill="none" stroke="#B3B0AD" stroke-width="1.1"/><path d="M32.5 12.5H39.5L36 16Z" fill="#C8C6C4"/></svg>
<svg style="left:1013px;top:717px;" width="46" height="29" viewBox="0 0 46 29"><rect x="10" y="6" width="16" height="1" fill="#B3B0AD"/><rect x="10" y="9" width="16" height="2" fill="#B3B0AD"/><rect x="10" y="13" width="16" height="3" fill="#B3B0AD"/><rect x="10" y="18" width="16" height="4" fill="#B3B0AD"/><path d="M32.5 12.5H39.5L36 16Z" fill="#C8C6C4"/></svg>
<div style="left:992px;top:556px;width:67px;height:22px;border:1px solid #D2D0CE;background:#fff"></div>
<div style="left:993px;top:584px;width:66px;height:22px;border:1px solid #D2D0CE;background:#fff"></div>
<div style="left:998px;top:562px;font-size:12px;line-height:12px;color:#C8C6C4;transform:scale(0.96,1.0);transform-origin:0 10px;">Square</div>
<div style="left:999px;top:590px;font-size:12px;line-height:12px;color:#C8C6C4;transform:scale(0.96,1.0);transform-origin:0 10px;">Round</div>
<svg style="left:992px;top:556px;" width="67" height="22" viewBox="0 0 67 22"><path d="M53.5 9.3H60.5L57 12.8Z" fill="#C8C6C4"/></svg>
<svg style="left:993px;top:584px;" width="66" height="22" viewBox="0 0 66 22"><path d="M52.5 9.3H59.5L56 12.8Z" fill="#C8C6C4"/></svg>
<svg style="left:0px;top:230px;" width="760" height="520" viewBox="0 0 760 520"><g transform="translate(0,-230)">
<path d="M80.5 320 L289 320 C305 320 316 327 333 338.3 L377 338.6 L404 337.2 L609 337 C636 337 655 355 662.4 377 C675 383 686 395 691.8 408.2 L700 408 C730 408 754 430 753.8 461.6 C753.5 470 752 476 750.5 482 C745 510 725 529 699 529 C685 529 675 524 666.4 516.7 L657 515.8 C636 512 619 500 610.4 484 L603.9 475.6 C590 468 581 456 575 444.8 L408.9 444.9 C396 445.5 386 446.4 374.6 446.4 L312.3 445.8 C296 445 286 437 273.4 427.8 L80 427.8 A53.5 53.9 0 0 1 80.5 320" fill="none" stroke="#000" stroke-width="2.3" stroke-linejoin="round"/>
<rect x="80.5" y="373.5" width="619" height="105" fill="none" stroke="#6E6E6E" stroke-width="1"/>
<path d="M390.5 348V373.5" stroke="#6E6E6E" stroke-width="1"/>
<circle cx="80.5" cy="373.5" r="4.5" fill="#fff" stroke="#666666" stroke-width="1.8"/><circle cx="390.5" cy="373.5" r="4.5" fill="#fff" stroke="#666666" stroke-width="1.8"/><circle cx="699.5" cy="373.5" r="4.5" fill="#fff" stroke="#666666" stroke-width="1.8"/><circle cx="80.5" cy="425.5" r="4.5" fill="#fff" stroke="#666666" stroke-width="1.8"/><circle cx="699.5" cy="425.5" r="4.5" fill="#fff" stroke="#666666" stroke-width="1.8"/><circle cx="80.5" cy="478.5" r="4.5" fill="#fff" stroke="#666666" stroke-width="1.8"/><circle cx="390.5" cy="478.5" r="4.5" fill="#fff" stroke="#666666" stroke-width="1.8"/><circle cx="699.5" cy="478.5" r="4.5" fill="#fff" stroke="#666666" stroke-width="1.8"/>
<path d="M394.15 345.5 A7.5 7.5 0 1 1 397.6 336.6" fill="none" stroke="#6E6E6E" stroke-width="5.2"/>
<path d="M394.15 345.5 A7.5 7.5 0 1 1 397.6 336.6" fill="none" stroke="#fff" stroke-width="2.0"/>
<path d="M393.5 338.6H403.8L398.6 344.6Z" fill="#fff" stroke="#6E6E6E" stroke-width="1.3" stroke-linejoin="round"/>
</g></svg>
</body></html>
